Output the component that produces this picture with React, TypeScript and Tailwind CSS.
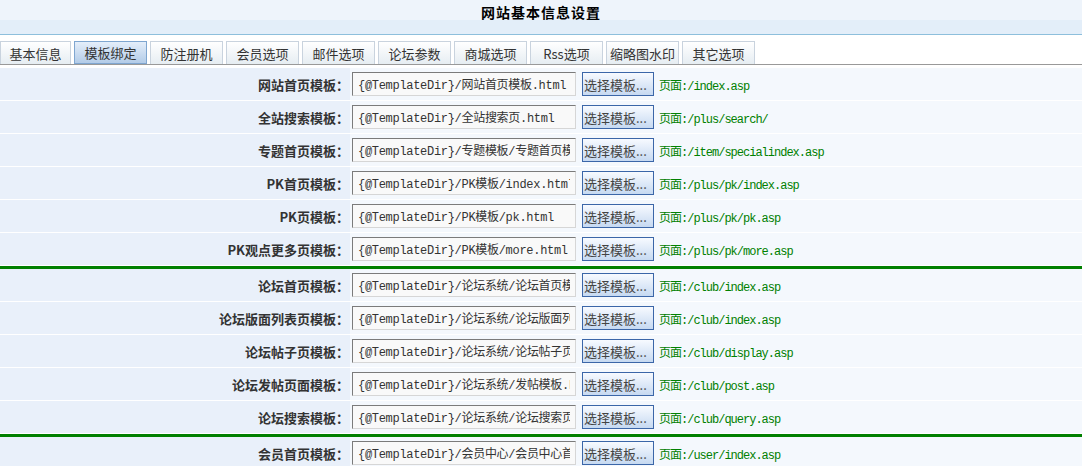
import React from 'react';

const tabs = ['基本信息', '模板绑定', '防注册机', '会员选项', '邮件选项', '论坛参数', '商城选项', 'Rss选项', '缩略图水印', '其它选项'];

type Row = { label: string; value: string; page: string };

const groups: Row[][] = [
  [
    { label: '网站首页模板：', value: '{@TemplateDir}/网站首页模板.html', page: '页面:/index.asp' },
    { label: '全站搜索模板：', value: '{@TemplateDir}/全站搜索页.html', page: '页面:/plus/search/' },
    { label: '专题首页模板：', value: '{@TemplateDir}/专题模板/专题首页模板.html', page: '页面:/item/specialindex.asp' },
    { label: 'PK首页模板：', value: '{@TemplateDir}/PK模板/index.html', page: '页面:/plus/pk/index.asp' },
    { label: 'PK页模板：', value: '{@TemplateDir}/PK模板/pk.html', page: '页面:/plus/pk/pk.asp' },
    { label: 'PK观点更多页模板：', value: '{@TemplateDir}/PK模板/more.html', page: '页面:/plus/pk/more.asp' },
  ],
  [
    { label: '论坛首页模板：', value: '{@TemplateDir}/论坛系统/论坛首页模板.html', page: '页面:/club/index.asp' },
    { label: '论坛版面列表页模板：', value: '{@TemplateDir}/论坛系统/论坛版面列表页.html', page: '页面:/club/index.asp' },
    { label: '论坛帖子页模板：', value: '{@TemplateDir}/论坛系统/论坛帖子页.html', page: '页面:/club/display.asp' },
    { label: '论坛发帖页面模板：', value: '{@TemplateDir}/论坛系统/发帖模板.html', page: '页面:/club/post.asp' },
    { label: '论坛搜索模板：', value: '{@TemplateDir}/论坛系统/论坛搜索页.html', page: '页面:/club/query.asp' },
  ],
  [
    { label: '会员首页模板：', value: '{@TemplateDir}/会员中心/会员中心首页.html', page: '页面:/user/index.asp' },
  ],
];

const TemplateRow: React.FC<{ row: Row }> = ({ row }) => (
  <div className="flex h-[33px] border-b border-white">
    <div className="w-[350px] shrink-0 bg-[#e9f0fa] flex items-center justify-end pr-[1px] text-[13px] font-bold text-[#333] leading-none font-['Noto_Sans_CJK_SC',sans-serif]">
      {row.label}
    </div>
    <div className="flex-1 bg-[#f4f8fd] flex items-center pl-[2px]">
      <input
        readOnly
        defaultValue={row.value}
        className="w-[224px] h-[24px] px-[5px] bg-[#f9f9f9] border border-t-[#7b7b7b] border-l-[#7b7b7b] border-b-[#d6d6d6] border-r-[#d6d6d6] text-[12px] tracking-[-0.3px] text-[#333] outline-none font-['Liberation_Mono','Noto_Sans_CJK_SC',monospace]"
      />
      <button className="ml-[6px] w-[72px] h-[24px] pl-[1px] text-left whitespace-nowrap overflow-hidden border border-[#3b66a8] bg-[linear-gradient(#f7faff,#c6d9f1)] text-[13px] text-[#444] leading-none font-['Noto_Sans_CJK_SC',sans-serif]">
        选择模板...
      </button>
      <span className="block ml-[5px] pt-[5px] text-[12px] tracking-[-1px] text-[#008000] whitespace-nowrap font-['Liberation_Mono','Noto_Sans_CJK_SC',monospace]">
        {row.page}
      </span>
    </div>
  </div>
);

export default function App() {
  return (
    <div className="w-[1082px] h-[466px] overflow-hidden bg-white">
      {/* Title */}
      <div className="h-[35px] border-b border-[#8dbfdc] bg-[linear-gradient(#eef4fb_0_20px,#e3eef9_20px)] flex justify-center">
        <div className="mt-[4px] text-[14px] font-bold tracking-[1px] text-black leading-[17px] font-['Noto_Sans_CJK_SC',sans-serif]">
          网站基本信息设置
        </div>
      </div>

      {/* Tabs */}
      <div className="pt-[6px] flex gap-[3px] border-b border-[#999]">
        {tabs.map((t, i) => {
          const active = i === 1;
          return (
            <div
              key={t}
              className={`${i === 0 ? 'w-[71px]' : 'w-[73px]'} h-[23px] flex items-center justify-center border text-[13px] text-[#333] leading-none font-['Noto_Sans_CJK_SC',sans-serif] ${
                active
                  ? 'border-[#7fa6d0] bg-[linear-gradient(#e4eefa,#b3cce8)]'
                  : 'border-[#c9d3de] border-b-0 bg-[linear-gradient(#ffffff,#e6edf2)]'
              }`}
            >
              {t}
            </div>
          );
        })}
      </div>

      <div className="mt-[3px]">
        {groups.map((g, gi) => (
          <div key={gi}>
            {gi > 0 && <div className="h-[3px] bg-[#008000]" />}
            {g.map(r => (
              <TemplateRow key={r.label} row={r} />
            ))}
          </div>
        ))}
      </div>
    </div>
  );
}
